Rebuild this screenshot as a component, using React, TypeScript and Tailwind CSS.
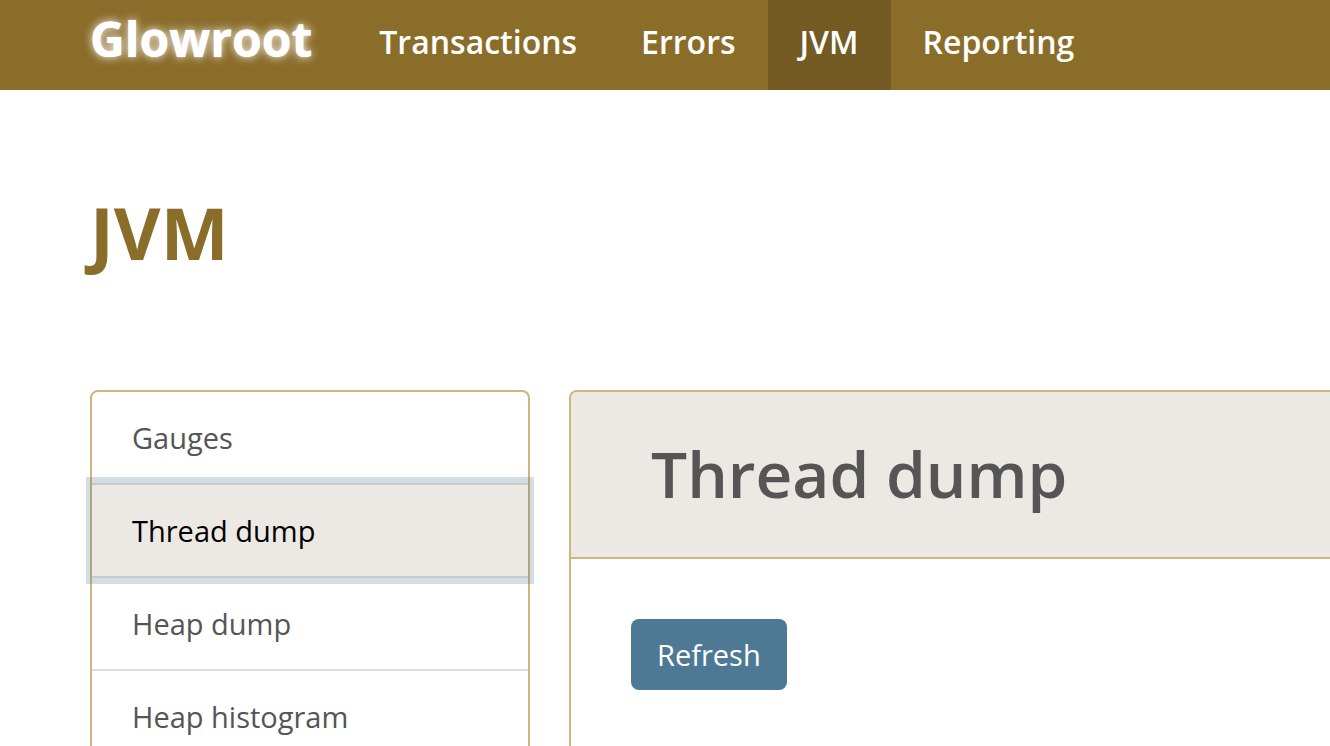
const nav = ['Transactions', 'Errors', 'JVM', 'Reporting'];
const items = ['Gauges', 'Thread dump', 'Heap dump', 'Heap histogram'];

export default function App() {
  return (
    <div className="h-screen overflow-hidden bg-white font-['Open_Sans','Noto_Sans',sans-serif] text-[#555555]">
      <header className="flex h-[90px] bg-[#8b6d2a] pl-[90px]">
        <a href="#home" className="mr-[35px] pt-[7px] text-[48px] leading-[64px] font-bold text-white [text-shadow:0_0_1px_#ffffff,0_0_10px_#ffffff]">
          Glowroot
        </a>
        <nav className="flex">
          {nav.map((label) => (
            <a
              key={label}
              href="#nav"
              className={`px-8 pt-5 text-[32px] leading-[44px] font-semibold text-white ${label === 'JVM' ? 'bg-[#745a23]' : ''}`}
            >
              {label}
            </a>
          ))}
        </nav>
      </header>
      <main className="pl-[90px]">
        <h1 className="pt-[94px] text-[72px] leading-[96px] font-bold text-[#8b6d2a]">JVM</h1>
        <div className="mt-[110px] flex items-start gap-[39px]">
          <aside className="w-[440px] shrink-0 rounded-lg border-2 border-[#cfb67c]">
            {items.map((label) => (
              <a
                key={label}
                href="#item"
                className={`block border-b-2 px-10 py-6 text-[29px] leading-[43px] ${label === 'Thread dump' ? 'relative -mt-[2px] border-t-2 bg-[#ece9e4] text-black border-[#c8c9ca] shadow-[0_0_0_6px_rgba(77,121,148,0.25)]' : 'border-[#dddddd]'}`}
              >
                {label}
              </a>
            ))}
          </aside>
          <section className="min-h-[500px] min-w-0 grow rounded-tl-lg border-t-2 border-l-2 border-[#cfb67c]">
            <h2 className="rounded-tl-md border-b-2 border-[#cfb67c] bg-[#ece9e4] px-20 pt-[39px] pb-10 text-[64px] leading-[86px] font-semibold">Thread dump</h2>
            <div className="p-[60px]">
              <button type="button" className="rounded-lg bg-[#4d7994] px-[26px] py-[14px] text-[29px] leading-[43px] text-white">Refresh</button>
            </div>
          </section>
        </div>
      </main>
    </div>
  );
}
